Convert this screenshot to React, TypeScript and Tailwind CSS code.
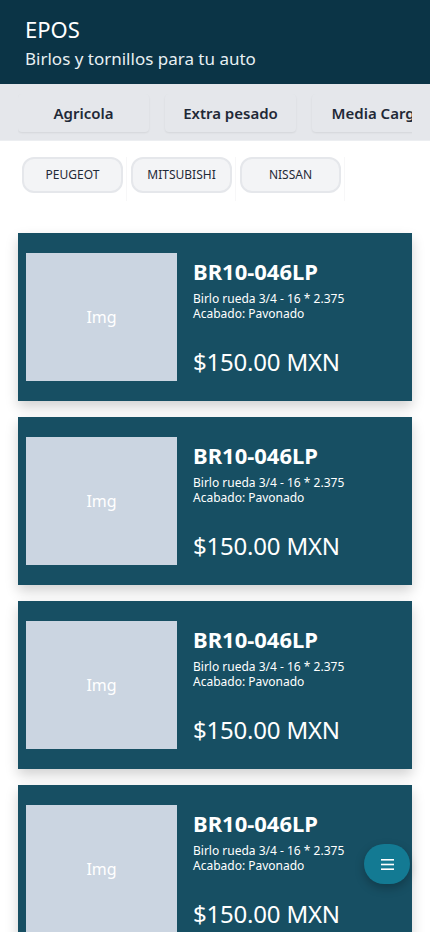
import React from "react";

const tabs = ["Agricola", "Extra pesado", "Media Carga", "Ligero"];
const brands = ["PEUGEOT", "MITSUBISHI", "NISSAN"];

function Card() {
  return (
    <div className="bg-[#174f63] shadow-[0_6px_12px_rgba(0,0,0,0.18)] flex pl-2 pr-4 pt-5 pb-5 gap-4 h-[168px]">
      <div className="w-[151px] h-[128px] shrink-0 bg-[#cbd5e1] flex items-center justify-center text-white text-[16px]">
        Img
      </div>
      <div className="flex flex-col text-white pt-[4px]">
        <div className="text-[22px] font-bold leading-[28px]">BR10-046LP</div>
        <div className="text-[12px] leading-[15px] mt-[6px]">Birlo rueda 3/4 - 16 * 2.375</div>
        <div className="text-[12px] leading-[15px]">Acabado: Pavonado</div>
        <div className="text-[24px] leading-[30px] mt-[26px] tracking-[-0.2px]">$150.00 MXN</div>
      </div>
    </div>
  );
}

export default function App() {
  return (
    <div className="w-[430px] h-[932px] overflow-hidden bg-white relative" style={{ fontFamily: '"Noto Sans", "Open Sans", sans-serif' }}>
      <header className="bg-[#0b3446] h-[84px] px-[25px] pt-[14px] text-white">
        <div className="text-[22px] leading-[30px]">EPOS</div>
        <div className="text-[17px] leading-[22px] text-[#e8f0f3] mt-[4px]">Birlos y tornillos para tu auto</div>
      </header>
      <nav className="bg-[#e5e7eb] h-[57px] border-b border-[#eceef1] px-[18px] pt-[10px]">
        <div className="flex gap-4 overflow-hidden whitespace-nowrap pb-[4px]">
          {tabs.map((t) => (
            <div
              key={t}
              className="w-[131px] shrink-0 h-[38px] flex items-center justify-center text-[15px] font-semibold text-[#1f2937] bg-[#e5e7eb] shadow-[0_1px_2px_rgba(0,0,0,0.08)] rounded-sm"
            >
              {t}
            </div>
          ))}
        </div>
      </nav>
      <div className="flex pl-[22px] pt-[16px]">
        {brands.map((b) => (
          <div key={b} className="pr-[3px] mr-[4px] border-r border-[#f7f7f8] h-[44px]">
            <div className="w-[101px] h-[36px] rounded-xl bg-[#f3f4f6] border-2 border-[#e5e7eb] flex items-center justify-center text-[12px] text-[#1f2937]">
              {b}
            </div>
          </div>
        ))}
      </div>
      <div className="flex flex-col gap-4 px-[18px] mt-[32px]">
        <Card />
        <Card />
        <Card />
        <Card />
      </div>
      <button className="absolute left-[364px] top-[844px] w-[46px] h-[40px] rounded-full bg-[#137a93] shadow-[0_4px_10px_rgba(0,0,0,0.25)] flex items-center justify-center">
        <svg width="13" height="11" viewBox="0 0 13 11">
          <rect x="0" y="0" width="13" height="1.6" fill="white" />
          <rect x="0" y="4.7" width="13" height="1.6" fill="white" />
          <rect x="0" y="9.4" width="13" height="1.6" fill="white" />
        </svg>
      </button>
    </div>
  );
}
